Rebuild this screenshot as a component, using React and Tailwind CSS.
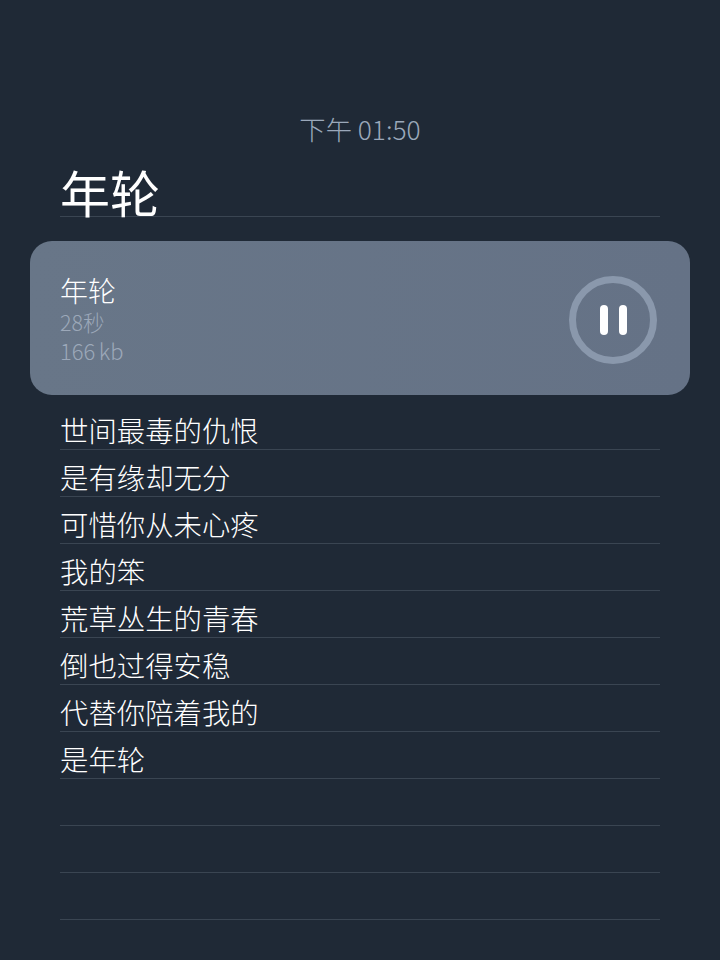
const lyrics = [
  "世间最毒的仇恨",
  "是有缘却无分",
  "可惜你从未心疼",
  "我的笨",
  "荒草丛生的青春",
  "倒也过得安稳",
  "代替你陪着我的",
  "是年轮",
  "",
  "",
  "",
];

function PauseButton() {
  return (
    <div className="mt-[4px] flex h-[88px] w-[88px] items-center justify-center gap-[11px] rounded-full border-[7px] border-[#8a98ac]">
      <span className="h-[30px] w-[8px] rounded-full bg-white" />
      <span className="h-[30px] w-[8px] rounded-full bg-white" />
    </div>
  );
}

export default function App() {
  return (
    <div className="h-[960px] w-[720px] overflow-hidden bg-[#1f2936] px-[30px] pt-[110px] font-['Noto_Sans_CJK_SC','Noto_Sans',sans-serif] font-light">
      <div className="text-center text-[26.3px] leading-[37px] text-[#9ba8ba]">下午 01:50</div>

      <h1 className="mx-[30px] h-[70px] border-b border-[#3a4552] text-[50px] leading-[88px] font-normal text-white">
        年轮
      </h1>

      {/* voice memo card */}
      <div className="mt-[24px] flex h-[154px] items-center justify-between rounded-[22px] bg-gradient-to-r from-[#687688] to-[#657286] pr-[33px] pl-[30px]">
        <div>
          <div className="text-[28px] leading-[36px] text-white">年轮</div>
          <div className="text-[21.5px] leading-[28px] text-[#9ca8b9]">28秒</div>
          <div className="text-[22px] leading-[28px] text-[#9ca8b9] [word-spacing:-1.5px]">166 kb</div>
        </div>
        <PauseButton />
      </div>

      <div className="mx-[30px] mt-[8px]">
        {lyrics.map((line, i) => (
          <div
            key={i}
            className="h-[47px] border-b border-[#3a4552] text-[28.4px] leading-[54px] whitespace-nowrap text-white"
          >
            {line}
          </div>
        ))}
      </div>
    </div>
  );
}
